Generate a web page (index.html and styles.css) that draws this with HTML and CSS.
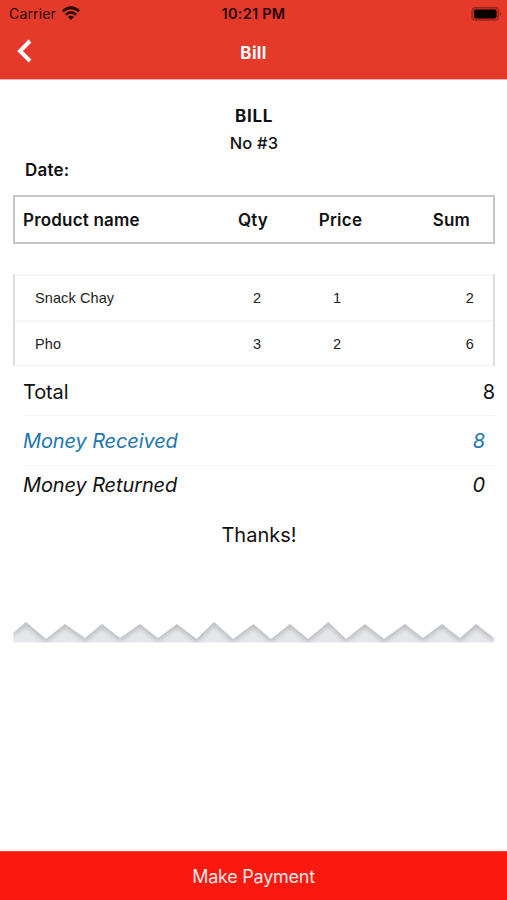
FILE: index.html
```html
<!DOCTYPE html>
<html lang="en">
<head>
<meta charset="utf-8">
<title>Bill</title>
<link rel="stylesheet" href="styles.css">
</head>
<body>
<div class="app">
  <header class="top">
    <div class="status">
      <div class="carrier"><span>Carrier</span>
        <svg width="20" height="15" viewBox="0 0 20 15"><g fill="none" stroke="#260503" stroke-width="2.8"><path d="M1.800 5.200Q10-1.800 18.200 5.200"/><path d="M4.800 8.700Q10 4 15.200 8.700"/></g><path d="M7 11Q10 8.500 13 11L10 14Z" fill="#260503"/></svg>
      </div>
      <span class="time">10:21 PM</span>
      <svg class="battery" width="31" height="14" viewBox="0 0 31 14"><rect x="1" y=".7" width="26.500" height="12.500" rx="3.500" fill="#c92e20" stroke="#97251b" stroke-width="1.200"/><rect x="3" y="2.500" width="22.500" height="9" rx="2" fill="#080000"/><path d="M29 5Q31 7 29 9Z" fill="#97251b"/></svg>
    </div>
    <div class="nav">
      <svg class="back" width="18" height="26" viewBox="0 0 18 26"><path d="M15 3L5 13L15 23" fill="none" stroke="#fff" stroke-width="4"/></svg>
      <h1>Bill</h1>
    </div>
  </header>
  <main>
    <h2><span>BILL</span></h2>
    <p class="number"><span>No #3</span></p>
    <p class="date"><span>Date:</span></p>
    <div class="row head"><span class="name">Product name</span><span class="qty">Qty</span><span class="price">Price</span><span class="sum">Sum</span></div>
    <div class="items">
      <div class="row"><span class="name">Snack Chay</span><span class="qty">2</span><span class="price">1</span><span class="sum">2</span></div>
      <div class="row"><span class="name">Pho</span><span class="qty">3</span><span class="price">2</span><span class="sum">6</span></div>
    </div>
    <div class="totals">
      <div class="line total"><span>Total</span><span>8</span></div>
      <div class="line received"><span>Money Received</span><span>8</span></div>
      <div class="line returned"><span>Money Returned</span><span>0</span></div>
    </div>
    <p class="thanks"><span>Thanks!</span></p>
    <svg class="tear" width="482" height="22" viewBox="13 621 482 22">
      <defs>
        <clipPath id="edge"><path d="M13 633L26 622L46 639L65 624L85 638L102 624L120 638L140 624L158 638L177 624L196.500 639L214 622L233 639L253.500 624L271 639L290 624L308 639L328.500 622L346 639L365 624L384 639L405 624L423 638L442 624L460 638L476 624L494 638V642.500H13Z"/></clipPath>
        <filter id="soft" x="-5%" y="-50%" width="110%" height="200%"><feGaussianBlur stdDeviation="2.500"/></filter>
      </defs>
      <g clip-path="url(#edge)"><path d="M13 621H495V643H13Z" fill="#e5e7eb"/><path filter="url(#soft)" d="M13 633L26 622L46 639L65 624L85 638L102 624L120 638L140 624L158 638L177 624L196.500 639L214 622L233 639L253.500 624L271 639L290 624L308 639L328.500 622L346 639L365 624L384 639L405 624L423 638L442 624L460 638L476 624L494 638" fill="none" stroke="#b5b8bb" stroke-width="5"/></g>
    </svg>
  </main>
  <button class="pay"><span>Make Payment</span></button>
</div>
</body>
</html>
```
FILE: styles.css
```css
* { box-sizing: border-box; }
body { margin: 0; background: #fff; color: #111; font-family: Inter, "Liberation Sans", sans-serif; }
h1, h2, p { margin: 0; }
svg { display: block; }
.app { height: 900px; display: flex; flex-direction: column; overflow: hidden; }
.top { height: 79px; background: #e53929; flex: none; box-shadow: 0 1px 0 #f5b5af; }
.status { height: 27px; display: grid; grid-template-columns: 1fr auto 1fr; align-items: center; padding: 0 5px 0 9px; color: #260503; font-size: 14px; }
.carrier { display: flex; gap: 5px; align-items: center; letter-spacing: .15px; }
.time { font-weight: 600; font-size: 14.500px; letter-spacing: .25px; margin-right: 4px; }
.battery { justify-self: end; }
.nav { height: 52px; display: grid; grid-template-columns: 36px 1fr 36px; align-items: center; }
.back { margin: -5px 0 0 15px; }
h1 { text-align: center; color: #fff; font-size: 17px; font-weight: 700; letter-spacing: .3px; }
main { flex: 1; padding: 24px 12px 0 13px; }
h2, .number, .date { height: 27px; line-height: 27px; font-size: 17px; text-align: center; }
h2 { font-weight: 700; letter-spacing: .7px; }
.number { font-weight: 500; font-size: 16.500px; letter-spacing: .2px; }
.date { text-align: left; padding-left: 12px; font-weight: 600; letter-spacing: .2px; }
.row { display: grid; grid-template-columns: 202px 80px 80px 1fr; align-items: center; }
.head { grid-template-columns: 197px 82px 93px 1fr; height: 49px; margin-top: 11px; border: 2px solid #c6c6c6; font-size: 17px; font-weight: 600; letter-spacing: .2px; }
.head .name { padding-left: 8px; }
.qty, .price { text-align: center; }
.sum { text-align: right; }
.head .sum { padding-right: 23px; }
.items { margin-top: 30px; border: solid #dedede; border-width: 0 2px; }
.items .row { height: 46px; border-top: 2px solid #f6f6f6; font: 14.500px "Liberation Sans", sans-serif; color: #222; letter-spacing: .1px; }
.items .row:last-child { border-bottom: 1px solid #f1f1f1; }
.items .name { padding-left: 20px; }
.items .sum { padding-right: 19px; }
.totals { padding-left: 10px; font-size: 20px; letter-spacing: -.12px; }
.line { display: flex; justify-content: space-between; align-items: center; }
.total { height: 50px; padding-top: 2px; border-bottom: 1px solid #f3f3f3; }
.received { height: 50px; border-bottom: 1px solid #f3f3f3; color: #1d75b0; }
.returned { height: 39px; padding-bottom: 2px; }
.received, .returned { font-style: italic; padding-right: 10px; }
.thanks { height: 60px; line-height: 60px; padding-left: 10px; text-align: center; font-size: 20px; }
.tear { margin-top: 56px; }
.pay { height: 49px; flex: none; border: 0; border-top: 1px solid #ed4336; background: #fb190f; color: #ffe5e2; font: 18px Inter, sans-serif; letter-spacing: -.25px; padding: 0; }
```
